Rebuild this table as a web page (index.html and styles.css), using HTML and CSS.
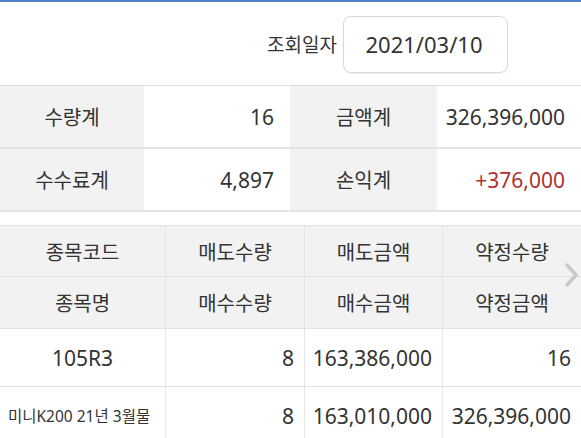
FILE: index.html
```html
<!DOCTYPE html>
<html lang="ko">
<head>
<meta charset="utf-8">
<link rel="stylesheet" href="styles.css">
</head>
<body>
<div class="topbar"></div>
<div class="header">
  <span class="hlabel">조회일자</span>
  <div class="datebox">2021/03/10</div>
</div>
<div class="summary">
  <div class="srow">
    <div class="lab">수량계</div>
    <div class="val">16</div>
    <div class="lab">금액계</div>
    <div class="val">326,396,000</div>
  </div>
  <div class="srow">
    <div class="lab">수수료계</div>
    <div class="val">4,897</div>
    <div class="lab">손익계</div>
    <div class="val red">+376,000</div>
  </div>
</div>
<div class="grid">
  <div class="grow head">
    <div class="c ctr">종목코드</div>
    <div class="c ctr">매도수량</div>
    <div class="c ctr">매도금액</div>
    <div class="c ctr">약정수량</div>
  </div>
  <div class="grow head">
    <div class="c ctr">종목명</div>
    <div class="c ctr">매수수량</div>
    <div class="c ctr">매수금액</div>
    <div class="c ctr">약정금액</div>
  </div>
  <div class="grow data">
    <div class="c ctr">105R3</div>
    <div class="c num">8</div>
    <div class="c num">163,386,000</div>
    <div class="c num">16</div>
  </div>
  <div class="grow data">
    <div class="c small">미니K200 21년 3월물</div>
    <div class="c num">8</div>
    <div class="c num">163,010,000</div>
    <div class="c num">326,396,000</div>
  </div>
  <svg class="chev" width="16" height="26" viewBox="0 0 16 26"><polyline points="3,3 12,13 3,23" fill="none" stroke="#c9c9c9" stroke-width="3.5" stroke-linecap="round" stroke-linejoin="round"/></svg>
</div>
</body>
</html>
```
FILE: styles.css
```css
* { box-sizing: border-box; }
html, body { margin: 0; padding: 0; background: #fff; }
body {
  font-family: "Noto Sans", "Noto Sans CJK KR", sans-serif;
  color: #333;
  width: 581px;
  height: 438px;
  overflow: hidden;
}
.topbar { height: 2px; background: #5282c4; }
.header {
  height: 83px;
  display: flex;
  justify-content: flex-end;
  align-items: center;
  padding-right: 73px;
  gap: 6px;
  padding-top: 1px;
}
.hlabel { font-size: 19px; }
.datebox {
  width: 165px;
  height: 57px;
  border: 1px solid #d8d8d8;
  border-radius: 8px;
  display: flex;
  align-items: center;
  justify-content: center;
  font-size: 22px;
  padding-right: 3px;
  box-shadow: 0 1px 2px rgba(0,0,0,0.06);
}
.summary { border-top: 1px solid #dedede; }
.srow {
  display: grid;
  grid-template-columns: 144px 146px 147px 144px;
  height: 63px;
  border-bottom: 2px solid #e4e4e4;
}
.srow .lab {
  background: #f2f2f2;
  display: flex;
  align-items: center;
  justify-content: center;
  font-size: 20px;
}
.srow .val {
  display: flex;
  align-items: center;
  justify-content: flex-end;
  padding-right: 16px;
  font-size: 21px;
}
.red { color: #b0302e; }
.grid {
  position: relative;
  margin-top: 13px;
  border-top: 1px solid #e2e2e2;
}
.grow {
  display: grid;
  grid-template-columns: 165px 139px 138px 139px;
  border-bottom: 1px solid #e2e2e2;
}
.grow.head { height: 51px; background: #f2f2f2; }
.grow.head + .grow.head { height: 52px; }
.grow.data { height: 58px; }
.c {
  display: flex;
  align-items: center;
  font-size: 21px;
  border-left: 1px solid #e6e6e6;
}
.c:first-child { border-left: none; }
.head .c { font-size: 20px; }
.ctr { justify-content: center; }
.num { justify-content: flex-end; padding-right: 10px; }
.small { font-size: 15.5px; padding-left: 8px; }
.chev { position: absolute; right: 1px; top: 36px; }
```
